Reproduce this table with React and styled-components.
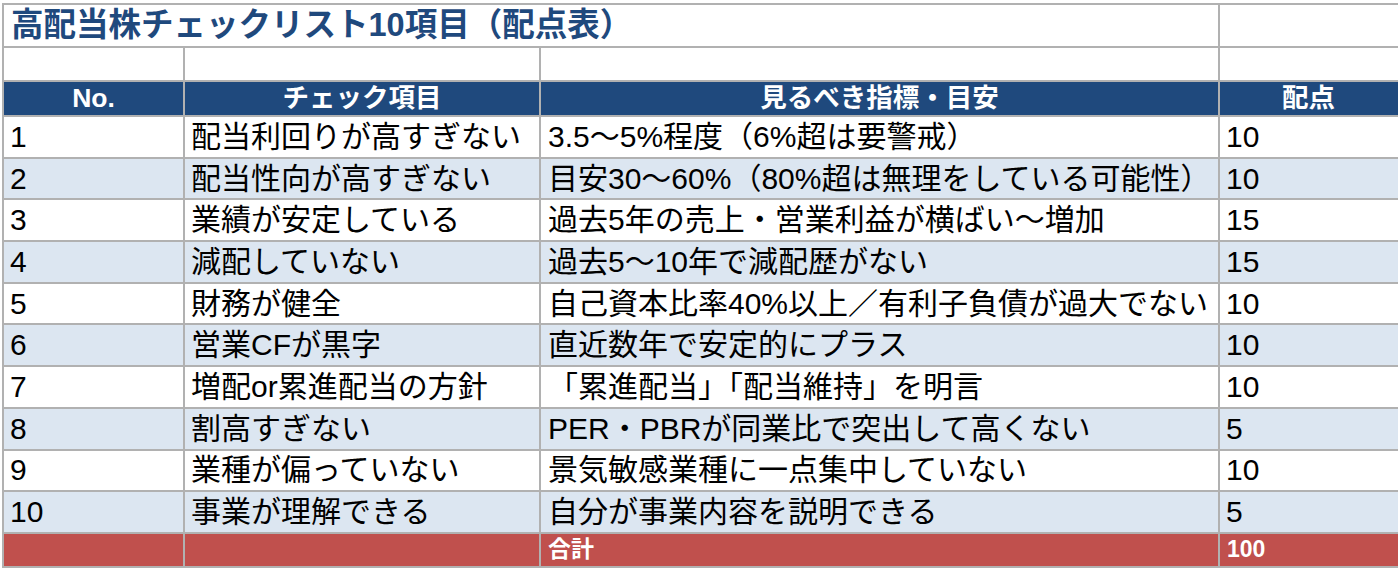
import React from 'react';
import styled, { createGlobalStyle } from 'styled-components';

const GlobalStyle = createGlobalStyle`
  html, body {
    margin: 0;
    padding: 0;
    background: #ffffff;
    overflow: hidden;
  }
  body {
    font-family: "Liberation Sans", "Noto Sans CJK JP", sans-serif;
  }
`;

const Page = styled.div`
  padding: 3px 0 0 2px;
  width: 1420px;
`;

const Sheet = styled.table`
  border-collapse: collapse;
  table-layout: fixed;
  width: 1420px;
  color: #000;

  td {
    border: 2px solid #b1b1b1;
    padding: 0;
    overflow: hidden;
    white-space: nowrap;
  }
`;

const TitleRow = styled.tr`
  height: 43px;
`;

const TitleCell = styled.td`
  font-size: 32.5px;
  font-weight: 700;
  color: #1f497d;
  padding-left: 7px !important;
  line-height: 1;
`;

const BlankRow = styled.tr`
  height: 34px;
`;

const HeadRow = styled.tr`
  height: 35px;
  background: #1f497d;
`;

const HeadCell = styled.td`
  color: #ffffff;
  font-weight: 700;
  font-size: 26.5px;
  text-align: ${(p) => (p.$left ? 'left' : 'center')};
  padding-left: ${(p) => p.$left || 0}px !important;
  line-height: 1;
`;

const DataRow = styled.tr`
  height: 41.7px;
  background: ${(p) => (p.$striped ? '#dce6f1' : '#ffffff')};
`;

const DataCell = styled.td`
  font-size: 30px;
  line-height: 1;
  padding-left: ${(p) => p.$pad || 6}px !important;
`;

const TotalRow = styled.tr`
  height: 34px;
  background: #c0504d;
`;

const TotalCell = styled.td`
  color: #ffffff;
  font-weight: 700;
  font-size: 23px;
  line-height: 1;
  padding-left: 7px !important;
`;

const items = [
  ['1', '配当利回りが高すぎない', '3.5～5%程度（6%超は要警戒）', '10'],
  ['2', '配当性向が高すぎない', '目安30～60%（80%超は無理をしている可能性）', '10'],
  ['3', '業績が安定している', '過去5年の売上・営業利益が横ばい～増加', '15'],
  ['4', '減配していない', '過去5～10年で減配歴がない', '15'],
  ['5', '財務が健全', '自己資本比率40%以上／有利子負債が過大でない', '10'],
  ['6', '営業CFが黒字', '直近数年で安定的にプラス', '10'],
  ['7', '増配or累進配当の方針', '「累進配当」「配当維持」を明言', '10'],
  ['8', '割高すぎない', 'PER・PBRが同業比で突出して高くない', '5'],
  ['9', '業種が偏っていない', '景気敏感業種に一点集中していない', '10'],
  ['10', '事業が理解できる', '自分が事業内容を説明できる', '5'],
];

export default function App() {
  return (
    <>
      <GlobalStyle />
      <Page>
        <Sheet>
          <colgroup>
            <col style={{ width: 181 }} />
            <col style={{ width: 356 }} />
            <col style={{ width: 679 }} />
            <col style={{ width: 204 }} />
          </colgroup>
          <tbody>
            <TitleRow>
              <TitleCell colSpan={3}>高配当株チェックリスト10項目（配点表）</TitleCell>
              <td />
            </TitleRow>
            <BlankRow>
              <td />
              <td />
              <td />
              <td />
            </BlankRow>
            <HeadRow>
              <HeadCell>No.</HeadCell>
              <HeadCell>チェック項目</HeadCell>
              <HeadCell>見るべき指標・目安</HeadCell>
              <HeadCell $left={62}>配点</HeadCell>
            </HeadRow>
            {items.map(([no, item, guide, score], i) => (
              <DataRow key={no} $striped={i % 2 === 1}>
                <DataCell $pad={6}>{no}</DataCell>
                <DataCell $pad={6}>{item}</DataCell>
                <DataCell $pad={7}>{guide}</DataCell>
                <DataCell $pad={6}>{score}</DataCell>
              </DataRow>
            ))}
            <TotalRow>
              <TotalCell />
              <TotalCell />
              <TotalCell>合計</TotalCell>
              <TotalCell>100</TotalCell>
            </TotalRow>
          </tbody>
        </Sheet>
      </Page>
    </>
  );
}
